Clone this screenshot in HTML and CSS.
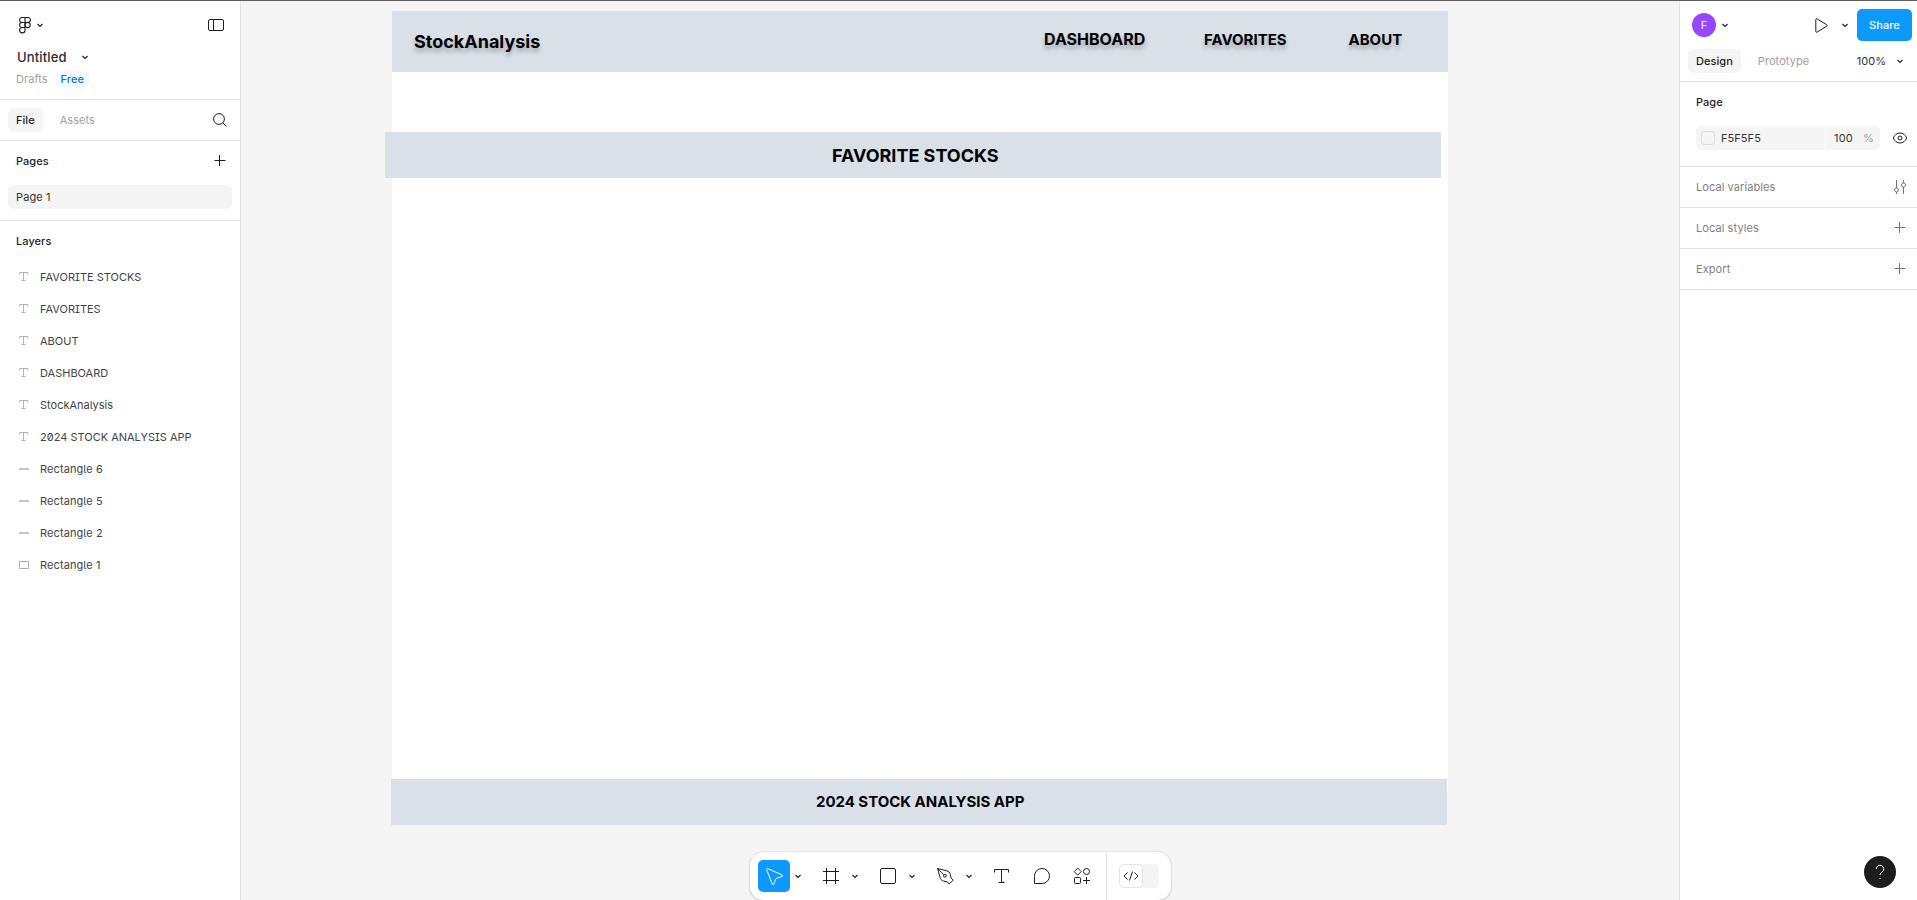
FILE: index.html
```
<!DOCTYPE html>
<html lang="en">
<head>
<meta charset="utf-8">
<title>Untitled</title>
<link rel="stylesheet" href="styles.css">
</head>
<body>
<svg class="defs" aria-hidden="true">
  <symbol id="chev" viewBox="0 0 8 8"><path d="M1.500 3 4 5.500 6.500 3"/></symbol>
  <symbol id="plus" viewBox="0 0 12 12"><path d="M0.500 5.500h11M5.500 0v11"/></symbol>
  <symbol id="type" viewBox="0 0 10 10"><path d="M.500 2.500V.500h8v2M4.500.500v8M2.500 8.500h4"/></symbol>
</svg>
<div class="app">
  <aside class="left">
    <div class="file-head">
      <div class="row logo-row">
        <svg class="logo" width="12" height="17" viewBox="0 0 12 17"><path d="M6 .5H3.100a2.500 2.500 0 0 0 0 5H6zM6 .5h2.900a2.500 2.500 0 0 1 0 5H6zM6 5.500H3.100a2.500 2.500 0 0 0 0 5H6zM6 10.500H3.100a2.700 2.700 0 1 0 2.900 2.700z"/><circle cx="8.600" cy="8" r="2.600"/></svg>
        <svg class="chev"><use href="#chev"/></svg>
        <svg class="push" width="16" height="12" viewBox="0 0 16 12"><rect x=".5" y=".5" width="15" height="11" rx="1.500"/><path d="M5.500.5v11"/></svg>
      </div>
      <div class="row title-row"><span class="title">Untitled</span><svg class="chev"><use href="#chev"/></svg></div>
      <div class="row plan-row"><span>Drafts</span><span class="free">Free</span></div>
    </div>
    <div class="tabs row">
      <span class="tab on">File</span><span class="tab">Assets</span>
      <svg class="push search" width="14" height="14" viewBox="0 0 14 14"><circle cx="6" cy="6" r="5.400"/><path d="m10 10 3.500 3.500"/></svg>
    </div>
    <div class="pages">
      <div class="row pages-head"><span>Pages</span><svg class="push plus"><use href="#plus"/></svg></div>
      <div class="page">Page 1</div>
    </div>
    <div class="layers-head">Layers</div>
    <ul class="layers">
      <li><svg><use href="#type"/></svg>FAVORITE STOCKS</li>
      <li><svg><use href="#type"/></svg>FAVORITES</li>
      <li><svg><use href="#type"/></svg>ABOUT</li>
      <li><svg><use href="#type"/></svg>DASHBOARD</li>
      <li><svg><use href="#type"/></svg>StockAnalysis</li>
      <li><svg><use href="#type"/></svg>2024 STOCK ANALYSIS APP</li>
      <li><i class="bar"></i>Rectangle 6</li>
      <li><i class="bar"></i>Rectangle 5</li>
      <li><i class="bar"></i>Rectangle 2</li>
      <li><i class="box"></i>Rectangle 1</li>
    </ul>
  </aside>

  <main class="canvas">
    <div class="shape sheet"></div>
    <div class="shape top"></div>
    <div class="shape band"></div>
    <div class="shape foot"></div>
    <span class="text brand">StockAnalysis</span>
    <span class="text dash">DASHBOARD</span>
    <span class="text favs">FAVORITES</span>
    <span class="text about">ABOUT</span>
    <span class="text heading">FAVORITE STOCKS</span>
    <span class="text copy">2024 STOCK ANALYSIS APP</span>

    <div class="toolbar">
      <div class="tools">
        <span class="tool active"><svg width="32" height="32" viewBox="0 0 32 32"><path d="M8.600 9.600 14.300 24.200a.8.8 0 0 0 1.500-.1L17.400 19.500a2 2 0 0 1 1.200-1.200L24.100 16.500a.8.8 0 0 0 0-1.500L9.600 8.500a.8.8 0 0 0-1 1.100z"/></svg></span>
        <svg class="chev"><use href="#chev"/></svg>
        <span class="tool"><svg width="32" height="32" viewBox="0 0 32 32"><path d="M11.500 8v16M20.500 8v16M8 11.500h16M8 20.500h16"/></svg></span>
        <svg class="chev"><use href="#chev"/></svg>
        <span class="tool"><svg width="32" height="32" viewBox="0 0 32 32"><rect x="8.500" y="8.500" width="15" height="15" rx="1.500"/></svg></span>
        <svg class="chev"><use href="#chev"/></svg>
        <span class="tool"><svg width="32" height="32" viewBox="0 0 32 32"><path d="M8.600 8.500 11 17.300c.5 2 1.600 3.200 3.500 3.700l3.900.9 1.800 2.200 4-4-2.100-1.900-.8-3.700c-.4-2-1.700-3.200-3.600-3.700zM8.600 8.500l6.300 6.300"/><circle cx="15.900" cy="15.800" r="1.400"/></svg></span>
        <svg class="chev"><use href="#chev"/></svg>
        <span class="tool"><svg width="32" height="32" viewBox="0 0 32 32"><path d="M8.500 12.500v-3h14v3M15.500 9.500v13M12.500 22.500h6"/></svg></span>
        <span class="tool comment"><svg width="32" height="32" viewBox="0 0 32 32"><path d="M8.500 23.500V16.200a7.500 7.500 0 1 1 7.700 7.300z"/></svg></span>
        <span class="tool"><svg width="32" height="32" viewBox="0 0 32 32"><path d="m11.700 8 3.500 3.600-3.500 3.600-3.500-3.600z"/><circle cx="20.500" cy="11.500" r="3"/><rect x="8.500" y="17.500" width="6" height="6" rx="1"/><path d="M20.500 17v7M17 20.500h7"/></svg></span>
      </div>
      <div class="dev"><span class="switch"><span class="knob"><svg width="16" height="10" viewBox="0 0 16 10"><path d="M4.500 1.500 1 5l3.500 3.500M11.500 1.500 15 5l-3.500 3.500M9.500.5l-3 9"/></svg></span></span></div>
    </div>
  </main>

  <aside class="right">
    <div class="right-head">
      <div class="row user-row">
        <span class="avatar">F</span><svg class="chev big"><use href="#chev"/></svg>
        <svg class="push play" width="13" height="15" viewBox="0 0 13 15"><path d="M.8 1.500v12a.8.8 0 0 0 1.200.6l9.800-5.900a.8.8 0 0 0 0-1.400L2 .9a.8.8 0 0 0-1.200.6z"/></svg>
        <svg class="chev"><use href="#chev"/></svg>
        <span class="share">Share</span>
      </div>
      <div class="row mode-row"><span class="tab on">Design</span><span class="tab">Prototype</span><span class="push zoom">100%</span><svg class="chev"><use href="#chev"/></svg></div>
    </div>
    <div class="page-props">
      <div class="props-title">Page</div>
      <div class="row fill-row">
        <span class="hex"><i></i>F5F5F5</span><span class="alpha">100<b>%</b></span>
        <svg class="push" width="16" height="12" viewBox="0 0 16 12"><path d="M1.300 6C2.600 2.800 5 1 8 1s5.400 1.800 6.700 5C13.400 9.200 11 11 8 11S2.600 9.200 1.300 6z"/><circle cx="8" cy="6" r="2"/></svg>
      </div>
    </div>
    <div class="section row"><span>Local variables</span><svg class="push vars" width="13" height="15" viewBox="0 0 13 15"><path d="M3.500 0v8M3.500 12v2M10.500 0v3M10.500 7v7"/><circle cx="3.500" cy="10" r="2"/><circle cx="10.500" cy="5" r="2"/></svg></div>
    <div class="section row"><span>Local styles</span><svg class="push plus"><use href="#plus"/></svg></div>
    <div class="section row"><span>Export</span><svg class="push plus"><use href="#plus"/></svg></div>
    <div class="help"><svg width="32" height="32" viewBox="0 0 32 32"><path d="M12.300 13a3.700 3.700 0 1 1 5.800 3c-1.200.8-2 1.500-2 3"/><path d="M15.500 22.500h1"/></svg></div>
  </aside>
</div>
</body>
</html>
```
FILE: styles.css
```
* { box-sizing: border-box; }
body {
  margin: 0;
  font: 11px/16px Inter, "Liberation Sans", sans-serif;
  letter-spacing: .055px;
  color: #1e1e1e;
  background: #fff;
}
svg { display: block; flex: none; fill: none; stroke: #1e1e1e; stroke-width: 1; }
.defs { position: absolute; width: 0; height: 0; }
.app {
  display: grid;
  grid-template-columns: 241px 1fr 238px;
  height: 900px;
  border-top: 1px solid #5f5c60;
  overflow: hidden;
}
.row { display: flex; align-items: center; }
.push { margin-left: auto; }
.chev { width: 8px; height: 8px; stroke-width: 1.15; }
.plus { width: 12px; height: 12px; }

/* left panel */
.left { border-right: 1px solid #e3e3e3; }
.file-head { height: 99px; padding: 12px 16px 0 16px; border-bottom: 1px solid #e3e3e3; }
.logo-row { height: 24px; padding-left: 3px; }
.logo { stroke-width: 1.1; }
.logo-row .chev { margin-left: 5px; }
.title-row { height: 24px; margin-top: 8px; padding-left: 1px; }
.title { font-size: 13px; font-weight: 450; letter-spacing: .15px; width: 64px; color: #2c2c2c; }
.plan-row { height: 16px; margin-top: 2px; color: #a0a0a0; }
.plan-row .free { margin-left: 8px; padding: 0 5px; color: #007be5; background: #f2f9ff; border-radius: 4px; font-weight: 450; }
.tabs { height: 41px; padding: 0 13px 0 8px; border-bottom: 1px solid #e3e3e3; }
.tab { height: 24px; padding: 0 8px; line-height: 24px; color: #a0a0a0; border-radius: 5px; }
.tab + .tab { margin-left: 9px; }
.tab.on { background: #f5f5f5; color: #1e1e1e; font-weight: 500; }
.pages { height: 80px; border-bottom: 1px solid #e3e3e3; }
.pages-head { height: 40px; padding: 0 14px 0 16px; font-weight: 500; }
.page { height: 24px; margin: 4px 8px 0; padding: 0 8px; line-height: 24px; background: #f5f5f5; border-radius: 5px; letter-spacing: .1px; color: #333; }
.layers-head { height: 40px; padding-left: 16px; line-height: 40px; font-weight: 500; }
.layers { list-style: none; margin: 0; padding: 0; font-feature-settings: "ss02"; color: #444; letter-spacing: 0; }
.layers li { display: flex; align-items: center; height: 32px; padding-left: 19px; }
.layers li:nth-child(n+7) { letter-spacing: .09px; }
.layers svg { width: 10px; height: 10px; margin-right: 11px; stroke: #b3b3b3; }
.bar, .box { width: 10px; margin-right: 11px; }
.bar { height: 2px; background: #c4c4c4; }
.box { height: 8px; border: 1px solid #b3b3b3; }

/* canvas */
.canvas { position: relative; background: #f5f5f5; }
.shape, .text { position: absolute; }
.shape { left: 151px; width: 1056px; background: #dae0e8; }
.shape.sheet { top: 10px; height: 780px; background: #fff; }
.shape.top { top: 10px; height: 61px; }
.shape.band { left: 144px; top: 131px; height: 46px; }
.shape.foot { left: 150px; top: 778px; height: 46px; }
.text { font-weight: 700; color: #000; line-height: 20px; letter-spacing: 0; white-space: nowrap; }
.brand { left: 173px; top: 31px; font-size: 18px; }
.dash { left: 803px; top: 28px; font-size: 16px; }
.favs { left: 963px; top: 29px; font-size: 15px; }
.about { left: 1107.500px; top: 29px; font-size: 15px; }
.brand, .dash, .favs, .about { text-shadow: 0 4px 4px rgba(0, 0, 0, .25); }
.heading { left: 591px; top: 145px; font-size: 18px; }
.copy { left: 575px; top: 791px; font-size: 15px; letter-spacing: -.02px; }

.toolbar {
  position: absolute;
  left: 509px;
  top: 851px;
  display: flex;
  width: 421px;
  height: 48px;
  background: #fff;
  border-radius: 13px;
  box-shadow: 0 0 1px rgba(0, 0, 0, .3), 0 1px 3px rgba(0, 0, 0, .15);
}
.tools { display: flex; align-items: center; width: 357px; padding-left: 8px; border-right: 1px solid #e3e3e3; }
.tool { width: 32px; height: 32px; border-radius: 5px; }
.tool + .chev { margin: 0 13px 0 4px; }
.tool.active { background: #0d99ff; }
.active svg { stroke: #fff; }
.tools .tool + .tool { margin-left: 8px; }
.dev { padding: 12px; }
.switch { display: block; width: 40px; height: 24px; background: #f5f5f5; border-radius: 5px; }
.knob { display: flex; align-items: center; justify-content: center; width: 24px; height: 24px; background: #fff; border: 1px solid #e3e3e3; border-radius: 5px; }

/* right panel */
.right { position: relative; border-left: 1px solid #e3e3e3; }
.right-head { height: 81px; padding: 8px 5px 0 8px; border-bottom: 1px solid #e3e3e3; }
.user-row { height: 32px; padding-left: 4px; }
.avatar { width: 24px; height: 24px; line-height: 24px; text-align: center; color: #fff; background: #9747ff; border-radius: 50%; }
.avatar + .chev { margin-left: 5px; }
.play + .chev { margin: 0 8px 0 13px; }
.share { width: 55px; height: 32px; line-height: 32px; text-align: center; color: #fff; background: #0d99ff; border-radius: 5px; font-weight: 500; }
.mode-row { height: 24px; margin-top: 8px; padding-right: 8px; }
.mode-row .chev { margin-left: 10px; }
.zoom { color: #333; }
.page-props { height: 85px; padding: 12px 9px 0 16px; border-bottom: 1px solid #e3e3e3; }
.props-title { font-weight: 500; }
.fill-row { height: 24px; margin-top: 16px; }
.hex, .alpha { display: flex; align-items: center; height: 24px; background: #f5f5f5; color: #333; }
.hex { width: 129px; padding-left: 5px; border-radius: 5px 0 0 5px; }
.hex i { width: 14px; height: 14px; margin-right: 6px; border: 1px solid #dcdcdc; border-radius: 3px; }
.alpha { width: 54px; margin-left: 1px; padding-left: 8px; border-radius: 0 5px 5px 0; letter-spacing: .2px; }
.alpha b { margin-left: 10px; font-weight: 400; color: #a0a0a0; }
.section { height: 41px; padding: 0 11px 0 16px; border-bottom: 1px solid #e3e3e3; color: #808080; letter-spacing: .08px; }
.section svg { stroke: #757575; }
.help { position: absolute; left: 184px; top: 855px; width: 32px; height: 32px; background: #1e1e1e; border-radius: 50%; }
.help svg { stroke: #fff; }
```
